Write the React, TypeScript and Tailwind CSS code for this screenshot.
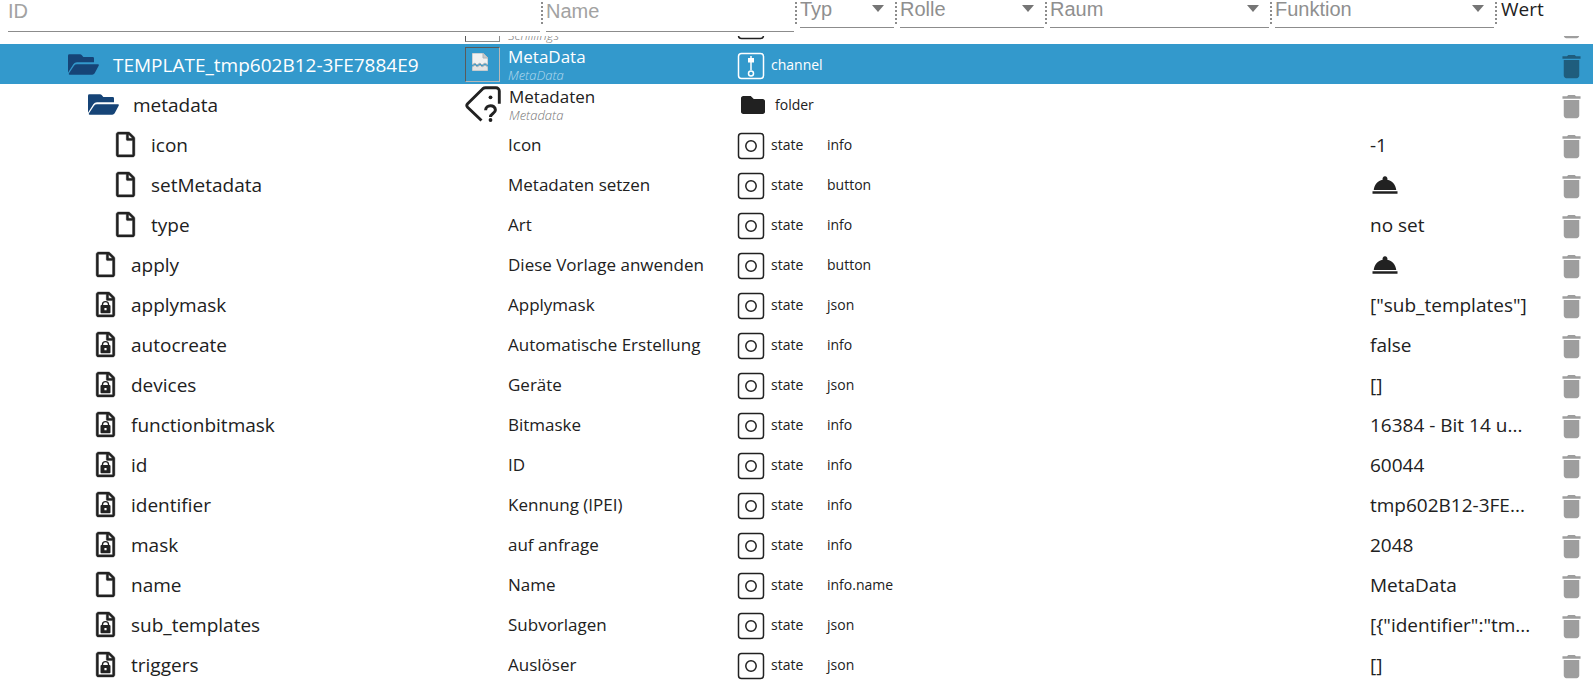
import React from "react";
import { FaFolder } from "react-icons/fa";
import { MdDelete, MdRoomService } from "react-icons/md";

type Kind = "state" | "folder" | "channel";

interface Item {
  id: string;
  level: 0 | 1 | 2 | 3;
  locked?: boolean;
  name: string;
  sub?: string;
  kind: Kind;
  role?: string;
  value?: string;
}

const ITEMS: Item[] = [
  { id: "TEMPLATE_tmp602B12-3FE7884E9", level: 0, name: "MetaData", sub: "MetaData", kind: "channel" },
  { id: "metadata", level: 1, name: "Metadaten", sub: "Metadata", kind: "folder" },
  { id: "icon", level: 3, name: "Icon", kind: "state", role: "info", value: "-1" },
  { id: "setMetadata", level: 3, name: "Metadaten setzen", kind: "state", role: "button" },
  { id: "type", level: 3, name: "Art", kind: "state", role: "info", value: "no set" },
  { id: "apply", level: 2, name: "Diese Vorlage anwenden", kind: "state", role: "button" },
  { id: "applymask", level: 2, locked: true, name: "Applymask", kind: "state", role: "json", value: '["sub_templates"]' },
  { id: "autocreate", level: 2, locked: true, name: "Automatische Erstellung", kind: "state", role: "info", value: "false" },
  { id: "devices", level: 2, locked: true, name: "Geräte", kind: "state", role: "json", value: "[]" },
  { id: "functionbitmask", level: 2, locked: true, name: "Bitmaske", kind: "state", role: "info", value: "16384 - Bit 14 u..." },
  { id: "id", level: 2, locked: true, name: "ID", kind: "state", role: "info", value: "60044" },
  { id: "identifier", level: 2, locked: true, name: "Kennung (IPEI)", kind: "state", role: "info", value: "tmp602B12-3FE..." },
  { id: "mask", level: 2, locked: true, name: "auf anfrage", kind: "state", role: "info", value: "2048" },
  { id: "name", level: 2, name: "Name", kind: "state", role: "info.name", value: "MetaData" },
  { id: "sub_templates", level: 2, locked: true, name: "Subvorlagen", kind: "state", role: "json", value: '[{"identifier":"tm...' },
  { id: "triggers", level: 2, locked: true, name: "Auslöser", kind: "state", role: "json", value: "[]" },
];

const INDENT = ["pl-[68px]", "pl-[88px]", "pl-[96px]", "pl-[116px]"];

function FileIcon({ locked }: { locked?: boolean }) {
  return (
    <svg viewBox="0 0 384 512" className="h-[25px] w-[19px] shrink-0 overflow-visible" fill="currentColor" aria-hidden="true">
      <path
        d="M369.9 97.9L286 14C277 5 264.8-.1 252.1-.1H48C21.5 0 0 21.5 0 48v416c0 26.5 21.5 48 48 48h288c26.5 0 48-21.5 48-48V131.9c0-12.7-5.1-25-14.1-34zM332.1 128H256V51.9l76.1 76.1zM48 464V48h160v104c0 13.300 10.700 24 24 24h104v288H48z"
        stroke="currentColor"
        strokeWidth="8"
      />
      {locked && (
        <>
          <path d="M130 280v-22a62 62 0 0 1 124 0v22" fill="none" stroke="currentColor" strokeWidth="28" />
          <path
            fillRule="evenodd"
            d="M108 268h168c10 0 18 8 18 18v132c0 10-8 18-18 18H108c-10 0-18-8-18-18V286c0-10 8-18 18-18zm62 62v44h44v-44z"
          />
        </>
      )}
    </svg>
  );
}

function OpenFolderIcon() {
  return (
    <svg viewBox="0 0 93 63" className="h-[21px] w-[31px] shrink-0" fill="#164477" aria-hidden="true">
      <path d="M4 1h32q3 0 5 2l5 6h28q4 0 4 4v12H27q-7 0-11 6L0 56V5q0-4 4-4z" />
      <path d="M27 31h63q4 0 2 4L80 58q-3 4-7 4H5q-4 0-2-4L18 35q3-4 9-4z" />
    </svg>
  );
}

function StateIcon() {
  return (
    <svg viewBox="0 0 28 28" className="mt-1 size-7 shrink-0" fill="none" stroke="currentColor" aria-hidden="true">
      <rect x="1.5" y="1.5" width="25" height="25" rx="3" strokeWidth="1.5" />
      <circle cx="14" cy="14" r="5.2" strokeWidth="1.5" />
    </svg>
  );
}

function ChannelIcon() {
  return (
    <svg viewBox="0 0 28 28" className="mt-1 size-7 shrink-0" fill="none" stroke="currentColor" aria-hidden="true">
      <rect x="1.5" y="1.5" width="25" height="25" rx="3" strokeWidth="1.5" />
      <path d="M14 4v14" strokeWidth="1.5" />
      <path d="M11 6h6v4.500h-6z" fill="currentColor" stroke="none" />
      <circle cx="14" cy="21.5" r="2.5" strokeWidth="1.5" />
    </svg>
  );
}

function TagIcon() {
  return (
    <svg viewBox="0 0 36 36" className="size-9 shrink-0" fill="none" stroke="currentColor" strokeWidth="2.9" aria-hidden="true">
      <path d="M16.500 34.500L2.600 21.200a2.500 2.500 0 0 1 0-3.400L17.800 2.700Q19 1.700 20.500 1.700H31a3.300 3.300 0 0 1 3.300 3.300v12.800" />
      <path d="M20.600 24.200c0-6 9.800-6 9.800-.2 0 3.600-4.900 3.400-4.900 7" strokeWidth="3" />
      <circle cx="25.5" cy="11.3" r="1.9" fill="currentColor" stroke="none" />
      <circle cx="25.5" cy="34" r="1.9" fill="currentColor" stroke="none" />
    </svg>
  );
}

function MissingPicture() {
  return (
    <span className="flex h-[35px] w-[35px] shrink-0 border border-t-[#5a5a5a] border-r-[#b8b8b8] border-b-[#b8b8b8] border-l-[#5a5a5a] pt-[5px] pl-1.5">
      <svg viewBox="0 0 16 18" className="h-[18px] w-4" aria-hidden="true">
        <path d="M0 0h11l5 5v7l-3-2-3 2-2-2-3 2-2-2-3 2z" fill="#f1f1f1" stroke="#a9b4ba" />
        <path d="M11 0v5h5" fill="#c9c9c9" stroke="#a9b4ba" />
        <path d="M0 14l3-2 2 2 3-2 2 2 3-2 3 2v4H0z" fill="#e4e4e4" stroke="#a9b4ba" />
      </svg>
    </span>
  );
}

function Divider() {
  return <span className="mt-1.5 mr-[3px] ml-px h-[22px] shrink-0 border-l-2 border-dotted border-[#8c8c8c]" />;
}

function TextFilter({ label, className }: { label: string; className: string }) {
  return (
    <div className={`flex items-start ${className}`}>
      <input
        aria-label={label}
        placeholder={label}
        className="h-9 w-full min-w-0 border-b border-[#8c8c8c] pb-[5px] text-xl leading-6 outline-none placeholder:text-[#a2a2a2]"
      />
      <Divider />
    </div>
  );
}

function SelectFilter({ label, className }: { label: string; className: string }) {
  return (
    <div className={`flex items-start ${className}`}>
      <div className="flex h-8 w-full min-w-0 items-start border-b border-[#8c8c8c]">
        <select
          aria-label={label}
          className="h-[26px] w-full min-w-0 appearance-none text-xl leading-[26px] text-[#8f8f8f] outline-none"
        >
          <option>{label}</option>
        </select>
        <svg viewBox="0 0 12 7" className="mt-[9px] mr-2.5 h-[7px] w-3 shrink-0" fill="#757575" aria-hidden="true">
          <path d="M0 0h12L6 7z" />
        </svg>
      </div>
      <Divider />
    </div>
  );
}

function ItemRow({ item, selected }: { item: Item; selected: boolean }) {
  const isFile = item.kind === "state";
  return (
    <tr className={selected ? "h-10 bg-[#3399cc] text-white" : "h-10"}>
      <td className="p-0">
        <div className={`flex items-center ${INDENT[item.level]} ${isFile ? "gap-4" : "gap-3.5"}`}>
          {isFile ? <FileIcon locked={item.locked} /> : <OpenFolderIcon />}
          <span className="pt-0.5 text-[19px] leading-6 whitespace-nowrap">{item.id}</span>
        </div>
      </td>
      <td className="p-0">
        <div className="flex h-10 items-center gap-2">
          {item.kind === "channel" && <MissingPicture />}
          {item.kind === "folder" && <TagIcon />}
          {isFile && <span className="w-[35px] shrink-0" />}
          <div className="pt-0.5 whitespace-nowrap">
            <div className="text-[17px] leading-5">{item.name}</div>
            {item.sub && (
              <div className={`text-[13px] leading-4 font-light italic ${selected ? "text-[#b5daee]" : "text-[#777777]"}`}>
                {item.sub}
              </div>
            )}
          </div>
        </div>
      </td>
      <td className="p-0">
        <div className="flex h-10 items-center gap-1.5 text-sm leading-5">
          {item.kind === "state" && <StateIcon />}
          {item.kind === "channel" && <ChannelIcon />}
          {item.kind === "folder" && <FaFolder className="mx-1 mt-0.5 size-6 shrink-0" />}
          <span className="pt-0.5">{item.kind}</span>
        </div>
      </td>
      <td className="px-0 pt-0.5 pb-0 text-sm leading-5">{item.role}</td>
      <td className="px-0 pt-0.5 pb-0 text-[19px] leading-6 whitespace-nowrap">
        {item.role === "button" ? (
          <button type="button" aria-label="Auslösen" className="block">
            <MdRoomService className="size-[30px]" />
          </button>
        ) : (
          item.value
        )}
      </td>
      <td className="px-0 pt-1 pb-0">
        <button type="button" aria-label={`${item.id} löschen`} className="ml-auto block pr-1.5">
          <MdDelete className={selected ? "size-[31px] text-[#1f5d7d]" : "size-[31px] text-[#9e9e9e]"} />
        </button>
      </td>
    </tr>
  );
}

export default function App() {
  return (
    <main className="overflow-hidden bg-white font-['Open_Sans','Noto_Sans',sans-serif] text-[#212121]">
      <header className="-mt-1 flex h-10 items-start pl-2 font-['Liberation_Sans',sans-serif]">
        <TextFilter label="ID" className="min-w-0 flex-1" />
        <TextFilter label="Name" className="w-[254px]" />
        <SelectFilter label="Typ" className="w-[100px]" />
        <SelectFilter label="Rolle" className="w-[150px]" />
        <SelectFilter label="Raum" className="w-[225px]" />
        <SelectFilter label="Funktion" className="w-[225px]" />
        <span className="w-[93px] pl-px font-['Open_Sans',sans-serif] text-[19px] leading-[26px]">Wert</span>
      </header>
      <div className="overflow-hidden">
        <table className="-mt-8 w-full table-fixed border-collapse text-left">
          <colgroup>
            <col />
            <col className="w-[272px]" />
            <col className="w-[90px]" />
            <col className="w-[543px]" />
            <col className="w-[160px]" />
            <col className="w-[63px]" />
          </colgroup>
          <tbody>
            <tr className="h-10">
              <td className="p-0" />
              <td className="p-0">
                <div className="flex h-10 items-center gap-2">
                  <span className="h-[35px] w-[35px] shrink-0 border border-[#8c8c8c] border-l-[#5a5a5a]" />
                  <div className="pt-0.5">
                    <div className="h-5" />
                    <div className="text-[13px] leading-4 font-light text-[#777777] italic">Schillings</div>
                  </div>
                </div>
              </td>
              <td className="p-0">
                <StateIcon />
              </td>
              <td className="p-0" />
              <td className="p-0" />
              <td className="px-0 pt-1 pb-0">
                <MdDelete className="mr-1.5 ml-auto size-[31px] text-[#9e9e9e]" />
              </td>
            </tr>
            {ITEMS.map((item, index) => (
              <ItemRow key={item.id} item={item} selected={index === 0} />
            ))}
          </tbody>
        </table>
      </div>
    </main>
  );
}
